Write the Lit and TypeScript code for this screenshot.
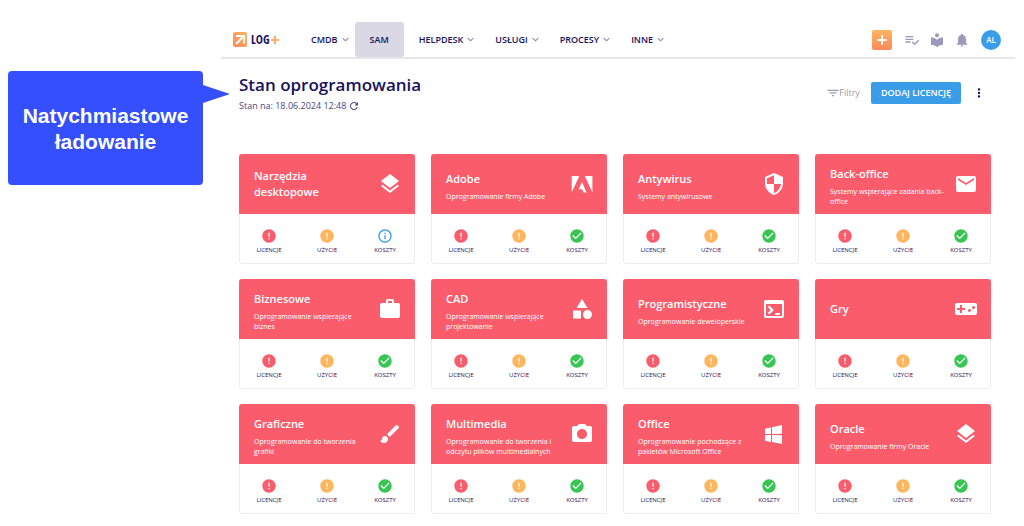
import { LitElement, html, css, svg, nothing } from "lit";
import { customElement, property } from "lit/decorators.js";

const ICONS: Record<string, string> = {
  layers: "M12 18.54l-7.37-5.73L3 14.07l9 7 9-7-1.63-1.27-7.38 5.74zM12 16l7.36-5.73L21 9l-9-7-9 7 1.63 1.27L12 16z",
  adobe: "M1.7 4h7.6L1.7 20.5zM14.8 4h7.6v16.5zM12 10l4.5 10.5h-3l-1.3-3.3H8.7z",
  shield: "M12 1L3 5v6c0 5.55 3.84 10.74 9 12 5.16-1.26 9-6.45 9-12V5l-9-4zm0 10.99h7c-.53 4.12-3.28 7.79-7 8.94V12H5V6.3l7-3.11v8.8z",
  mail: "M20 4H4c-1.1 0-1.99.9-1.99 2L2 18c0 1.1.9 2 2 2h16c1.1 0 2-.9 2-2V6c0-1.1-.9-2-2-2zm0 4l-8 5-8-5V6l8 5 8-5v2z",
  work: "M20 6h-4V4c0-1.11-.89-2-2-2h-4c-1.11 0-2 .89-2 2v2H4c-1.11 0-1.99.89-1.99 2L2 19c0 1.11.89 2 2 2h16c1.11 0 2-.89 2-2V8c0-1.11-.89-2-2-2zm-6 0h-4V4h4v2z",
  category: "M12 2l-5.5 9h11zM13 17.5a4.5 4.5 0 1 0 9 0a4.5 4.5 0 1 0-9 0zM3 13.5h8v8H3z",
  terminal: "M20 3H4c-1.11 0-2 .9-2 2v14c0 1.1.89 2 2 2h16c1.1 0 2-.9 2-2V5c0-1.1-.89-2-2-2zm0 16H4V7h16v12zm-2-1h-5v-2h5v2zM7.3 17.5l-1.6-1.6L8.6 13l-2.9-2.9 1.6-1.6L11.8 13z",
  gamepad: "M21 6H3c-1.1 0-2 .9-2 2v8c0 1.1.9 2 2 2h18c1.1 0 2-.9 2-2V8c0-1.1-.9-2-2-2zm-10 7H8v3H6v-3H3v-2h3V8h2v3h3v2zm4.5 2c-.83 0-1.5-.67-1.5-1.5s.67-1.5 1.5-1.5 1.5.67 1.5 1.5-.67 1.5-1.5 1.5zm4-3c-.83 0-1.5-.67-1.5-1.5S18.67 9 19.5 9s1.5.67 1.5 1.5-.67 1.5-1.5 1.5z",
  brush: "M7 14c-1.66 0-3 1.34-3 3 0 1.31-1.16 2-2 2 .92 1.22 2.49 2 4 2 2.21 0 4-1.79 4-4 0-1.66-1.34-3-3-3zm13.71-9.37l-1.34-1.34c-.39-.39-1.02-.39-1.41 0L9 12.25 11.75 15l8.96-8.96c.39-.39.39-1.02 0-1.41z",
  camera: "M9 2L7.17 4H4c-1.1 0-2 .9-2 2v12c0 1.1.9 2 2 2h16c1.1 0 2-.9 2-2V6c0-1.1-.9-2-2-2h-3.17L15 2H9zm3 15c-2.76 0-5-2.24-5-5s2.24-5 5-5 5 2.24 5 5-2.24 5-5 5z",
  windows: "M3 12V6.75l6-1.32v6.48L3 12M20 3v8.75l-10 .15V5.21L20 3M3 13l6 .09v6.81l-6-1.15V13m17 .25V22l-10-1.91V13.1l10 .15z",
  error: "M12 2C6.48 2 2 6.48 2 12s4.48 10 10 10 10-4.48 10-10S17.52 2 12 2zm1 15h-2v-2h2v2zm0-4h-2V7h2v6z",
  check: "M12 2C6.48 2 2 6.48 2 12s4.48 10 10 10 10-4.48 10-10S17.52 2 12 2zm-2 15l-5-5 1.41-1.41L10 14.17l7.59-7.59L19 8l-9 9z",
  info: "M11 7h2v2h-2zm0 4h2v6h-2zm1-9C6.48 2 2 6.48 2 12s4.48 10 10 10 10-4.48 10-10S17.52 2 12 2zm0 18c-4.41 0-8-3.59-8-8s3.59-8 8-8 8 3.59 8 8-3.59 8-8 8z",
  chevron: "M6.500 8L12 13.200 17.500 8 19 9.600 12 16.500 5 9.600z",
  plus: "M20 13.700h-6.300V20h-3.400v-6.300H4v-3.400h6.300V4h3.400v6.300H20z",
  tasks: "M14 10H2v2h12v-2zm0-4H2v2h12V6zM2 16h8v-2H2v2zm19.500-4.500L23 13l-6.990 7-4.510-4.500L13 14l3.010 3 5.490-5.500z",
  library: "M12 11.550C9.640 9.350 6.480 8 3 8v11c3.480 0 6.640 1.350 9 3.550 2.360-2.190 5.520-3.550 9-3.550V8c-3.480 0-6.640 1.350-9 3.550zM12 8c1.660 0 3-1.340 3-3s-1.340-3-3-3-3 1.340-3 3 1.340 3 3 3z",
  bell: "M12 22c1.100 0 2-.9 2-2h-4c0 1.100.890 2 2 2zm6-6v-5c0-3.070-1.640-5.640-4.500-6.320V4c0-.83-.67-1.500-1.500-1.500s-1.500.67-1.500 1.500v.68C7.630 5.360 6 7.920 6 11v5l-2 2v1h16v-1l-2-2z",
  filter: "M10 18.500h4v-2.500h-4v2.500zM1 5.500v2.500h22V5.500H1zm4 7.700h14v-2.500H5v2.500z",
  more: "M12 8c1.100 0 2-.9 2-2s-.9-2-2-2-2 .9-2 2 .9 2 2 2zm0 2c-1.100 0-2 .9-2 2s.9 2 2 2 2-.9 2-2-.9-2-2-2zm0 6c-1.100 0-2 .9-2 2s.9 2 2 2 2-.9 2-2-.9-2-2-2z",
  refresh: "M17.650 6.350C16.200 4.900 14.210 4 12 4c-4.420 0-7.990 3.580-7.990 8s3.570 8 7.990 8c3.730 0 6.840-2.550 7.730-6h-2.080c-.82 2.330-3.040 4-5.650 4-3.310 0-6-2.690-6-6s2.690-6 6-6c1.660 0 3.140.69 4.220 1.780L13 11h7V4l-2.350 2.350z",
};

const icon = (name: string, size: number, cls = "") => html`
  <svg class="icon ${cls}" width=${size} height=${size} viewBox="0 0 24 24" aria-hidden="true">
    ${svg`<path fill="currentColor" d=${ICONS[name]} />`}
  </svg>`;

interface Category {
  name: string;
  note?: string;
  icon: string;
  cost?: "info";
}

const CATEGORIES: Category[] = [
  { name: "Narzędzia desktopowe", icon: "layers", cost: "info" },
  { name: "Adobe", note: "Oprogramowanie firmy Adobe", icon: "adobe" },
  { name: "Antywirus", note: "Systemy antywirusowe", icon: "shield" },
  { name: "Back-office", note: "Systemy wspierające zadania back-office", icon: "mail" },
  { name: "Biznesowe", note: "Oprogramowanie wspierające biznes", icon: "work" },
  { name: "CAD", note: "Oprogramowanie wspierające projektowanie", icon: "category" },
  { name: "Programistyczne", note: "Oprogramowanie deweloperskie", icon: "terminal" },
  { name: "Gry", icon: "gamepad" },
  { name: "Graficzne", note: "Oprogramowanie do tworzenia grafiki", icon: "brush" },
  { name: "Multimedia", note: "Oprogramowanie do tworzenia i odczytu plików multimedialnych", icon: "camera" },
  { name: "Office", note: "Oprogramowanie pochodzące z pakietów Microsoft Office", icon: "windows" },
  { name: "Oracle", note: "Oprogramowanie firmy Oracle", icon: "layers" },
];

const shared = css`
  *, *::before, *::after { box-sizing: border-box; }
  .icon { display: block; flex: none; }
`;

@customElement("software-card")
export class SoftwareCard extends LitElement {
  @property({ attribute: false }) category!: Category;

  static styles = [shared, css`
    :host { display: flex; flex-direction: column; border-radius: 3px; overflow: hidden; background: #fff; }
    .head { display: flex; align-items: center; height: 60px; padding: 0 13px 0 15px; background: #fb5c6c; color: #fff; }
    .text { flex: 1; min-width: 0; padding-right: 7px; }
    .noted { padding-top: 4px; }
    .name { margin: 0; max-width: 96px; font-size: 11px; line-height: 16px; font-weight: 600; }
    .note { margin: 5px 0 0; font-size: 7px; line-height: 10px; }
    .stats { display: grid; grid-template-columns: repeat(3, 1fr); margin: 0; padding: 14px 0 8px; list-style: none; color: #17125c; border: 1px solid #ececf1; border-top: 0; border-radius: 0 0 3px 3px; }
    .stat { display: flex; flex-direction: column; align-items: center; gap: 1px; font-size: 6px; line-height: 10px; }
    .red { color: #fb5c6c; }
    .amber { color: #ffb55c; }
    .green { color: #38c653; }
    .blue { color: #3a9de8; }
  `];

  render() {
    const c = this.category;
    return html`
      <header class="head">
        <div class="text ${c.note ? "noted" : ""}">
          <h2 class="name">${c.name}</h2>
          ${c.note ? html`<p class="note">${c.note}</p>` : nothing}
        </div>
        ${icon(c.icon, 24)}
      </header>
      <ul class="stats">
        <li class="stat">${icon("error", 16, "red")}LICENCJE</li>
        <li class="stat">${icon("error", 16, "amber")}UŻYCIE</li>
        <li class="stat">${c.cost ? icon("info", 16, "blue") : icon("check", 16, "green")}KOSZTY</li>
      </ul>`;
  }
}

@customElement("app-root")
export class AppRoot extends LitElement {
  static styles = [shared, css`
    :host { display: flex; min-height: 100vh; background: #fff; color: #17125c; font-family: "Open Sans", "Noto Sans", sans-serif; }
    button { font: inherit; color: inherit; border: 0; margin: 0; padding: 0; background: none; cursor: pointer; }
    a { color: inherit; text-decoration: none; }
    .side { flex: none; width: 221px; padding: 71px 18px 0 8px; }
    .callout { position: relative; display: flex; align-items: center; justify-content: center; height: 114px; margin: 0; padding-top: 2px; border-radius: 4px; background: #344ffb; color: #fff; text-align: center; font: 700 21px/26px "Liberation Sans", Arial, sans-serif; }
    .callout::after { content: ""; position: absolute; left: 100%; top: 14px; border-left: 27px solid #344ffb; border-top: 9px solid transparent; border-bottom: 9px solid transparent; }
    .app { flex: 1; min-width: 0; padding: 22px 9px 0 0; }
    .bar { display: flex; align-items: center; height: 37px; padding: 0 14px 0 12px; border-bottom: 2px solid #e6e6e9; }
    .logo { display: flex; align-items: center; width: 63px; }
    .brand { display: flex; align-items: center; gap: 1px; margin-left: 4px; font: 700 12px/16px "Liberation Sans Narrow", "Open Sans Condensed", "Roboto", sans-serif; }
    .brand-plus { color: #ffa057; }
    .nav { display: flex; flex: 1; height: 35px; }
    .item { display: flex; align-items: center; gap: 2px; padding: 0 4px 0 15px; font-size: 9px; line-height: 12px; font-weight: 600; }
    .item .icon { color: #8e8ab2; }
    .active { padding: 0 15px; border-radius: 3px; background: #dad8e5; }
    .tools { display: flex; align-items: center; color: #9d99bd; }
    .add { display: grid; place-items: center; width: 20px; height: 20px; border-radius: 2px; background: linear-gradient(#ffb45f, #ff895c); color: #fff; margin-right: 12px; }
    .tool { margin-right: 9px; }
    .avatar { width: 20px; height: 20px; border-radius: 50%; background: #3a9de8; color: #fff; font-size: 8px; line-height: 20px; font-weight: 600; text-align: center; margin-left: 2px; }
    .body { padding: 15px 24px 0 18px; }
    .top { display: flex; align-items: flex-start; height: 80px; }
    .title { margin: 0; font-size: 17px; line-height: 22px; font-weight: 600; }
    .when { display: flex; align-items: center; gap: 2px; margin: 4px 0 0; font-size: 9px; line-height: 12px; color: #4a467f; }
    .actions { display: flex; align-items: center; margin-left: auto; padding-top: 8px; }
    .filter { display: flex; align-items: center; margin-right: 11px; font-size: 9px; line-height: 12px; color: #9a9aab; }
    .primary { height: 22px; padding: 0 10px; border-radius: 2px; background: #3a9de8; color: #fff; font-size: 9px; line-height: 12px; font-weight: 600; }
    .more { margin: 0 5px 0 11px; }
    .grid { display: grid; grid-template-columns: repeat(4, 1fr); gap: 15px 16px; }
  `];

  render() {
    const menu = (label: string) => html`<button class="item">${label}${icon("chevron", 11)}</button>`;
    return html`
      <aside class="side"><p class="callout">Natychmiastowe<br />ładowanie</p></aside>
      <div class="app">
        <header class="bar">
          <a class="logo" href="#" aria-label="LOG+">
            <svg class="icon" width="14" height="15" viewBox="0 0 14 15" aria-hidden="true">
              <defs><linearGradient id="g" x1="0" y1="1" x2="1" y2="0"><stop stop-color="#ff895c" /><stop offset="1" stop-color="#ffb45f" /></linearGradient></defs>
              <rect width="14" height="15" rx="2" fill="url(#g)" />
              <path d="M3 4h8v7.500M10.300 4.500L3 12" fill="none" stroke="#fff" stroke-width="1.800" />
            </svg>
            <span class="brand">LOG<svg class="icon brand-plus" width="10" height="10" viewBox="0 0 24 24" aria-hidden="true"><path fill="currentColor" d="M22 14h-8v8h-4v-8H2v-4h8V2h4v8h8z" /></svg></span>
          </a>
          <nav class="nav">
            ${menu("CMDB")}
            <a class="item active" href="#">SAM</a>
            ${["HELPDESK", "USŁUGI", "PROCESY", "INNE"].map(menu)}
          </nav>
          <div class="tools">
            <button class="add" aria-label="Dodaj">${icon("plus", 14)}</button>
            <button class="tool" aria-label="Zadania">${icon("tasks", 16)}</button>
            <button class="tool" aria-label="Biblioteka">${icon("library", 16)}</button>
            <button class="tool" aria-label="Powiadomienia">${icon("bell", 16)}</button>
            <button class="avatar">AL</button>
          </div>
        </header>
        <main class="body">
          <div class="top">
            <div>
              <h1 class="title">Stan oprogramowania</h1>
              <p class="when">Stan na: 18.06.2024 12:48<button aria-label="Odśwież">${icon("refresh", 12)}</button></p>
            </div>
            <div class="actions">
              <button class="filter">${icon("filter", 12)}Filtry</button>
              <button class="primary">DODAJ LICENCJĘ</button>
              <button class="more" aria-label="Więcej">${icon("more", 14)}</button>
            </div>
          </div>
          <section class="grid">
            ${CATEGORIES.map((c) => html`<software-card .category=${c}></software-card>`)}
          </section>
        </main>
      </div>`;
  }
}
